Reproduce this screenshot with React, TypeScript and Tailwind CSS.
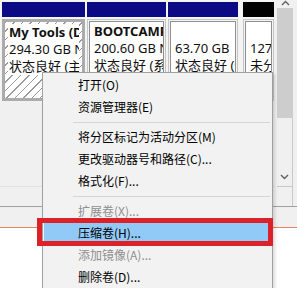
import React from "react";

type Item = { label?: string; sep?: boolean; disabled?: boolean; active?: boolean };

const menuItems: Item[] = [
  { label: "打开(O)" },
  { label: "资源管理器(E)" },
  { sep: true },
  { label: "将分区标记为活动分区(M)" },
  { label: "更改驱动器号和路径(C)..." },
  { label: "格式化(F)..." },
  { sep: true },
  { label: "扩展卷(X)...", disabled: true },
  { label: "压缩卷(H)...", active: true },
  { label: "添加镜像(A)...", disabled: true },
  { label: "删除卷(D)..." },
];

const font = { fontFamily: '"Noto Sans", "Noto Sans CJK SC", sans-serif' };

function Partition({
  width,
  head,
  lines,
}: {
  width: string;
  head: string;
  lines: (string | null)[];
}) {
  return (
    <div className={`flex flex-col ${width}`}>
      <div className={`h-[15px] ${head}`} />
      <div className="mt-[2px] h-[82px] border border-[#c4c4c4] p-[1px]">
        <div className="h-full border border-[#8e8e8e] bg-white px-[4px] pt-[1px] overflow-hidden whitespace-nowrap text-[13px] leading-[17px] text-[#111]">
          {lines.map((l, i) => (
            <div key={i} className={i === 0 ? "font-bold" : ""}>
              {l ?? "\u00a0"}
            </div>
          ))}
        </div>
      </div>
    </div>
  );
}

export default function App() {
  return (
    <div className="relative w-[297px] h-[288px] overflow-hidden bg-[#f0f0f0]" style={font}>
      {/* disk area */}
      <div className="flex h-[207px] border-b border-[#a0a0a0]">
        <div className="flex-1 flex flex-col">
          <div className="flex gap-[2px] pl-[2px] pt-[2px] h-[101px] bg-[#f4f4f4]">
            {/* selected partition */}
            <div className="flex flex-col w-[83px]">
              <div className="h-[15px] bg-[#0a0a84]" />
              <div className="mt-[2px] h-[82px] border-[3px] border-[#ababab] bg-[repeating-linear-gradient(-45deg,#ffffff_0px,#ffffff_5px,#9a9a9a_5px,#9a9a9a_6px)] p-[2px]">
                <div className="mx-[1px] bg-white pl-[1px] overflow-hidden whitespace-nowrap text-[13px] leading-[17px] text-[#111]">
                  <div className="font-bold">My Tools (D:)</div>
                  <div>294.30 GB NTFS</div>
                  <div>状态良好 (主分区)</div>
                </div>
              </div>
            </div>
            <Partition
              width="w-[79px]"
              head="bg-[#0a0a84]"
              lines={["BOOTCAMP (C:)", "200.60 GB NTFS", "状态良好 (系统, 启动)"]}
            />
            <Partition
              width="w-[70px]"
              head="bg-[#0a0a84]"
              lines={[null, "63.70 GB", "状态良好 (恢复分区)"]}
            />
            <div className="w-px" />
            <Partition width="w-[31px]" head="bg-black" lines={[null, "127 MB", "未分配"]} />
          </div>
          <div className="flex-1 border-b border-[#e2e2e2]" />
          <div className="h-[19px]" />
        </div>
        {/* vertical scrollbar */}
        <div className="w-[24px] flex flex-col pl-[3px] pr-[4px]">
          <div className="h-[8px] flex justify-center">
            <svg width="9" height="6" viewBox="0 0 9 6" className="mt-[0px]">
              <path d="M1 5 L4.5 1.5 L8 5" stroke="#606060" strokeWidth="1.4" fill="none" />
            </svg>
          </div>
          <div className="h-[110px] bg-[#cdcdcd]" />
          <div className="flex-1 flex flex-col border-r border-[#c8c8c8]">
            <div className="flex-1" />
            <div className="h-[18px] flex items-center justify-center">
              <svg width="9" height="6" viewBox="0 0 9 6">
                <path d="M1 1 L4.5 4.5 L8 1" stroke="#606060" strokeWidth="1.4" fill="none" />
              </svg>
            </div>
            <div className="h-[20px] border-t border-[#c8c8c8]" />
          </div>
        </div>
      </div>
      <div className="h-[20px]" />
      <div className="h-px bg-[#e4855a]" />
      <div className="h-[60px] bg-white" />

      {/* context menu */}
      <div className="absolute left-[42px] top-[72px] w-[231px] h-[230px] border border-[#a0a0a0] bg-[#f2f2f2] pt-[1px] px-[1px] shadow-[2px_2px_3px_rgba(0,0,0,0.15)]">
        {menuItems.map((it, i) =>
          it.sep ? (
            <div key={i} className="h-[8px] flex items-center pl-[29px] pr-[1px]">
              <div className="w-full h-px bg-[#d5d5d5]" />
            </div>
          ) : (
            <div
              key={i}
              className={`h-[22px] flex items-center pl-[34px] text-[12px] whitespace-nowrap ${
                it.active ? "bg-[#91c9f7] text-black" : it.disabled ? "text-[#8f8f8f]" : "text-black"
              }`}
              style={{ fontFamily: '"Noto Sans CJK SC", "Noto Sans", sans-serif' }}
            >
              {it.label}
            </div>
          )
        )}
      </div>

      {/* red annotation box */}
      <div className="absolute left-[37px] top-[218px] w-[236px] h-[28px] border-[5px] border-[#dc2128]" />
    </div>
  );
}
